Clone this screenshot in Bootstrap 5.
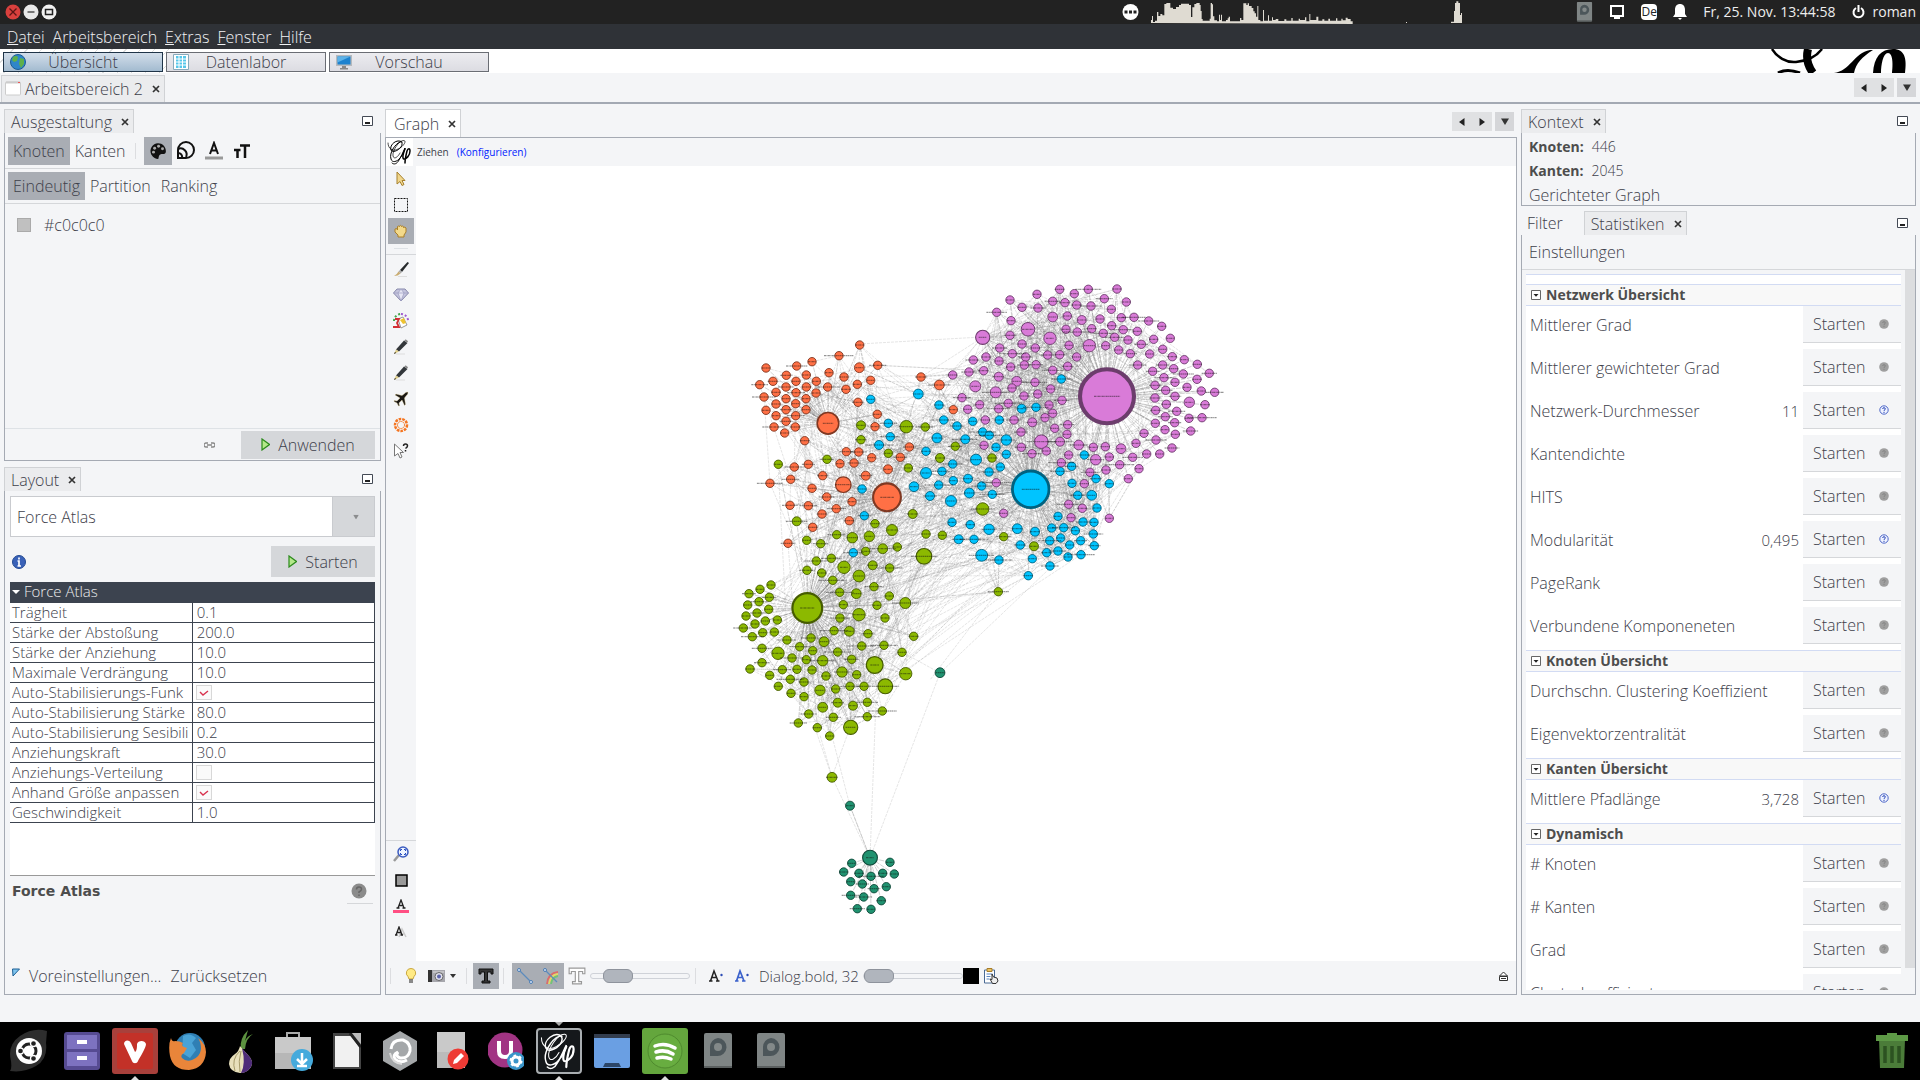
<!DOCTYPE html>
<html lang="de">
<head>
<meta charset="utf-8">
<meta name="viewport" content="width=device-width, initial-scale=1">
<title>Gephi</title>
<link href="https://cdn.jsdelivr.net/npm/bootstrap@5.3.0/dist/css/bootstrap.min.css" rel="stylesheet">
<script src="https://cdn.jsdelivr.net/npm/bootstrap@5.3.0/dist/js/bootstrap.bundle.min.js"></script>
<style>
:root{--edge:#a5aab3;--soft:#d5d7da;--face:#f4f5f7;--press:#a9adb4;--ink:#3d404a}
html,body{height:100%}
body{font-family:"Open Sans","Noto Sans",sans-serif;font-weight:300;font-size:16px;line-height:20px;color:var(--ink);background:var(--face);overflow:hidden}
svg{display:block;flex:none}
button{font:inherit;color:inherit;border:0;background:none;padding:0}
a{color:inherit;text-decoration:none}
b,h2,h3{font-weight:700;color:#4d4d4d;font-size:14px;line-height:20px;margin:0}
.sysbar{height:24px;background:#222;color:#eee;font-weight:400;font-size:14px}
.monitor{margin-right:97px}
.lang-box{width:16px;font-size:12px;line-height:16px}
.menubar{height:25px;background:#2f3237;color:#f2f3f5;padding-left:7px;gap:8px}
.banner{height:24px;background:#fff}
.hatch{background:repeating-linear-gradient(135deg,#fff 0 9px,#ddd 9px 10px);width:170px;height:24px;margin-right:-170px}
.persps{gap:3px;padding:2px 0 0 3px}
.persp{width:160px;height:20px;border:1px solid #6a6d74;background:linear-gradient(#ececf0,#dcdce2);padding:0 22px 0 6px}
.persp.on{border:1px solid #1f3448;background:linear-gradient(#d3deea,#a3bbd0)}
.worktabs{height:31px;border-bottom:2px solid #a3a9b3;padding-left:1px}
.tab{border:1px solid #d0d2d5;border-bottom:0;background:#ebecee;padding:0 4px 0 6px;gap:9px;height:24px;white-space:nowrap}
.arrows{background:#e0e1e3;height:19px;width:40px}
.arrows.one{width:19px;background:#d5d6d9}
.dockpane{border:1px solid var(--edge);border-top:0}
.side-l{width:377px;padding-top:1px}
.side-r{width:395px;padding-top:1px}
.tabline{height:24px}
.seg{height:28px;padding:0 5px}
.on-seg{background:var(--press)}
.rule{border-bottom:1px solid var(--soft)}
.greybtn{background:var(--soft);gap:8px}
.combo{appearance:none;width:100%;height:41px;border:1px solid #c9cbcf;padding:0 6px;font:inherit;color:inherit;border-radius:0;background:linear-gradient(90deg,#fff calc(100% - 42px),#c9cbcf calc(100% - 42px) calc(100% - 41px),var(--soft) calc(100% - 41px))}
.props{width:100%;table-layout:fixed;border-collapse:collapse;background:#fff;font-size:15px}
.props th{background:#3c434f;color:#eee;font-weight:300;height:20px;padding:0 2px;line-height:19px}
.props td{border:1px solid #3c434f;border-left:0;height:20px;padding:0 2px;line-height:19px;white-space:nowrap;overflow:hidden}
.props td+td{padding-left:4px}
.props input{appearance:none;width:16px;height:15px;border:1px solid #d8d8d8;background:#fafafa;margin:0 0 0 -1px;display:block}
.props input:checked{background:#fafafa url("data:image/svg+xml,%3Csvg xmlns='http://www.w3.org/2000/svg' viewBox='0 0 14 13'%3E%3Cpath d='M3 6l3 3 5-4' fill='none' stroke='%23d8324e' stroke-width='1.4'/%3E%3C/svg%3E") center/14px 13px no-repeat}
.tools{width:30px;border-right:0}
.tool{width:26px;height:26px;display:flex;align-items:center;justify-content:center}
.hint{font-size:10px;font-weight:400;height:28px}
.canvas-bar{height:33px;font-size:15px;padding:0 0 3px 4px}
.vsep{width:1px;height:16px;background:#dcdde0;flex:none}
.rng{appearance:none;width:100px;height:16px;background:none;margin:0}
.rng::-webkit-slider-runnable-track{height:6px;border:1px solid #cfd2d8;border-radius:3px;background:#f4f5f7}
.rng::-webkit-slider-thumb{appearance:none;width:30px;height:14px;margin-top:-5px;border-radius:6px;background:#b0b5bd;border:1px solid #8e939c}
.stats{background:#fff;overflow:hidden;margin:4px 0 4px 4px}
.stats-head{height:22px;border-top:1px solid #d2dbf3;border-bottom:1px solid #d2dbf3;background:#f8f8f8;padding-left:5px;gap:5px}
.stat{height:43px}
.stat-name{height:37px;padding:0 4px}
.stat-val{font-size:15px}
.stat-run{width:98px;height:37px;background:var(--face);border-bottom:1px solid var(--soft);padding:0 12px 0 10px}
.track{width:10px;background:#dcdddf;margin-bottom:26px}
.taskbar{height:58px;background:#000;padding:0 2px}
.launch{width:53px;height:58px;position:relative;display:flex;align-items:center;justify-content:center}
.run::after{content:"";position:absolute;bottom:0;left:23px;border:4px solid transparent;border-bottom:4px solid #ddd;border-top:0}
.cur::before{content:"";position:absolute;top:0;left:23px;border:4px solid transparent;border-top:4px solid #aaa;border-bottom:0}
</style>
</head>
<body class="d-flex flex-column">
<svg width="0" height="0" class="position-absolute">
<defs>
<symbol id="x" viewBox="0 0 8 8"><path d="M1 1l6 6M7 1L1 7" stroke="#333" stroke-width="1.700"/></symbol>
<symbol id="min" viewBox="0 0 11 10"><path d="M.5.5h10v9h-10z" fill="#fff" stroke="#444a55"/><path d="M3 6h5v2H3z" fill="#222"/></symbol>
<symbol id="al" viewBox="0 0 6 8"><path d="M5.500 0v8L0 4z" fill="#222"/></symbol>
<symbol id="ar" viewBox="0 0 6 8"><path d="M.5 0v8L6 4z" fill="#222"/></symbol>
<symbol id="ad" viewBox="0 0 8 7"><path d="M0 .5h8L4 7z" fill="#333"/></symbol>
<symbol id="play" viewBox="0 0 9 13"><path d="M1 1l7.500 5.500L1 12z" fill="#b4e88a" stroke="#2b8a1c" stroke-width="1.200"/></symbol>
<symbol id="fold" viewBox="0 0 10 10"><path d="M.5.5h9v9h-9z" fill="#fff" stroke="#666"/><path d="M2.500 4h5L5 6.800z" fill="#222"/></symbol>
<symbol id="q0" viewBox="0 0 10 10"><circle cx="5" cy="5" r="4.800" fill="#9f9f9f"/><path d="M3.700 4q0-1.300 1.300-1.300T6.300 4Q6.300 4.700 5 5.500v.7M5 7v1" fill="none" stroke="#858585"/></symbol>
<symbol id="q1" viewBox="0 0 10 10"><circle cx="5" cy="5" r="4.200" fill="#eef2ff" stroke="#4f68c8"/><path d="M3.700 4q0-1.300 1.300-1.300T6.300 4Q6.300 4.700 5 5.500v.7M5 7v1" fill="none" stroke="#2c49b8"/></symbol>
<symbol id="gephi" viewBox="0 0 26 26"><g fill="none" stroke="currentColor" stroke-linecap="round"><path d="M15 3C10-1 2 6 4 11c1 3 7 1 10-3 2-3 1-6-1-5C8 5 2 14 4 20c1 4 6 3 9-1 3-3 5-8 5-10-2 4-4 9-6 12-2 4-5 5-7 3" stroke-width="1"/><path d="M1 4c0 6 5 9 10 6C16 8 20 2 17 1.500 12 1 5 12 6 17c1 4 5 1 7-3" stroke-width=".7"/><path d="M18 10c-2 4-3 10-1 10s6-3 6-8c0-3-2-3-3 0-1 4-2 9-2 12" stroke-width="1.500"/></g></symbol>
<symbol id="pencil" viewBox="0 0 16 16"><path d="M3 15h9" stroke="#ddd"/><path d="M11 1.500l3.500 2.500L6 12.500 3 10.500z" fill="#33373b"/><path d="M3 10.500L1 15l5-2.500z" fill="#dccb87"/><path d="M1 15l1-2 1 1z" fill="#111"/><path d="M12 1l2.500 2" stroke="#888" stroke-width="2"/></symbol>
<symbol id="disk" viewBox="0 0 28 56"><rect width="28" height="35" rx="2" fill="#7f8585"/><rect y="33" width="28" height="2" fill="#5b6060"/><path d="M14 5a9 9 0 1 1-1 18H6V14a9 9 0 0 1 8-9z" fill="#4c565a"/><circle cx="14" cy="14" r="4" fill="#838989"/></symbol>
</defs></svg>

<header>
<div class="sysbar d-flex align-items-center">
  <svg width="60" height="24" viewBox="0 0 60 24"><circle cx="13" cy="12" r="7.500" fill="#d9403d"/><path d="M9.500 8.500l7 7m0-7l-7 7" stroke="#5a1515" stroke-width="1.300"/><circle cx="31" cy="12" r="7.500" fill="#e8e8e8"/><path d="M27.500 12h7" stroke="#777" stroke-width="2"/><circle cx="49" cy="12" r="7.500" fill="#f2f2f2"/><path d="M45.500 9.500h7v5h-7z" fill="none" stroke="#222" stroke-width="1.500"/></svg>
  <svg class="ms-auto" width="17" height="24" viewBox="0 0 17 24"><circle cx="8.500" cy="12" r="8" fill="#fff"/><path d="M2.500 12h12" stroke="#222" stroke-width="3" stroke-dasharray="3 1.500"/></svg>
  <svg class="monitor" width="340" height="24" viewBox="0 0 1020 72"><path fill="#dfdbd2" d="M36 69V60h3V48h3V66h6V62h6V36h4v12h6v-6h6v4h6V12h6V9h12v14h8v4h9v-6h9v-6h6v-4h24v4h6v36h4V22h6V12h6V9h10v6h3v18h3v24h3v5h21v-6h3V9h4v4h3v36h4v12h8v3h6V44h3v16h3v-16h3v20h12v-4h5v-5h3V50h4v14h30V54h4v6h6V10h9v5h4v-5h4v8h8v6h5v10h4v6h4v10h4V18h3v42h6v4h8V30h3v32h12V46h3v16h9V52h3v8h8v-3h8v6h18v-5h6v4h15v-8h4v8h18v-6h4v4h15v-8h4v12h9V42h3v18h18V50h6v12h12v-4h6v4h12v-6h5v6h18v-7h4v7h12v-6h4v5h9v-8h6v4h9v7h6v8zM801 66h3v3h-3zM936 69v-4h9V33h3V9h4V4h6v5h5v36h3v-6h3v30z"/></svg>
  <svg width="17" height="20" viewBox="0 0 28 36"><use href="#disk" width="28" height="56"/></svg>
  <svg class="ms-3" width="16" height="16" viewBox="0 0 16 16"><path d="M2 2h12v10H2zM5 14h6" fill="none" stroke="#fff" stroke-width="2"/></svg>
  <span class="lang-box bg-white text-dark ms-3 text-center rounded-1">De</span>
  <svg class="ms-3" width="14" height="16" viewBox="0 0 14 16"><path d="M7 0c3 0 5 2 5 6v4l2 3H0l2-3V6c0-4 2-6 5-6zM5 14h4l-2 2z" fill="#fff"/></svg>
  <span class="ms-3 text-nowrap">Fr, 25. Nov. 13:44:58</span>
  <svg class="ms-3 me-2" width="13" height="14" viewBox="0 0 13 14"><path d="M4 3a5 5 0 1 0 5 0M6.500 0v7" fill="none" stroke="#fff" stroke-width="2"/></svg>
  <span class="pe-1">roman</span>
</div>
<nav class="menubar d-flex align-items-center">
  <a href="#"><u>D</u>atei</a><a href="#">Arbeitsbereich</a><a href="#"><u>E</u>xtras</a><a href="#"><u>F</u>enster</a><a href="#"><u>H</u>ilfe</a>
</nav>
<div class="banner d-flex align-items-center">
  <div class="hatch"></div>
  <div class="persps d-flex position-relative">
  <button class="persp on d-flex align-items-center"><svg width="16" height="16" viewBox="0 0 16 16"><circle cx="8" cy="8" r="7.500" fill="#2f86c9" stroke="#1d5c94"/><path d="M3 3q3-2 5 0L7 7 4 8 2 6zM10 4l4 1v5l-3 4-2-4z" fill="#5fb04a"/></svg><span class="flex-fill text-center">Übersicht</span></button>
  <button class="persp d-flex align-items-center"><svg width="16" height="16" viewBox="0 0 16 16"><path d="M.5.500h15v15H.5z" fill="#fff" stroke="#8ab"/><path d="M3 2h10v12H3z" fill="#57c7ea"/><path d="M3 5h10M3 8h10M3 11h10M6 2v12M9.500 2v12" stroke="#fff"/></svg><span class="flex-fill text-center">Datenlabor</span></button>
  <button class="persp d-flex align-items-center"><svg width="16" height="16" viewBox="0 0 16 16"><path d="M0 1h16v11H0z" fill="#b6b9bd"/><path d="M1.500 2.500h13v8h-13z" fill="#1d82cf"/><path d="M1.500 2.500h13l-13 6z" fill="#5cb2e8"/><path d="M6 12h4v2h2v1.500H4V14h2z" fill="#888"/></svg><span class="flex-fill text-center">Vorschau</span></button>
  </div>
  <svg class="ms-auto me-2" width="144" height="24" viewBox="0 0 144 24"><g fill="none" stroke="#000"><path d="M4 0c5 8 14 14 24 13S48 8 54 0" stroke-width="2.500"/><path d="M40 0c-2 8-1 16 5 24" stroke-width="8"/><path d="M10 24q9-5 22 0" stroke-width="3"/></g><path d="M66 24C82 22 86 4 102 1h3C94 8 88 14 86 24zM105 24c1-16 8-24 20-24s14 10 12 24h-13c1-8 1-20-4-20s-7 12-7 20z"/></svg>
</div>
<div class="worktabs d-flex align-items-end">
  <div class="tab d-flex align-items-center" style="height:27px;padding-left:3px"><span class="d-flex align-items-center gap-1"><svg width="16" height="16" viewBox="0 0 16 16"><rect x=".5" y="1" width="15" height="13" rx="1" fill="#fff" stroke="#ccc"/><path d="M1 1.500h14" stroke="#ccc" stroke-width="2"/><path d="M13 1.500h2" stroke="#e55"/></svg>Arbeitsbereich 2</span><svg width="8" height="8"><use href="#x"/></svg></div>
  <div class="ms-auto d-flex align-self-center me-1" style="gap:3px"><button class="arrows d-flex align-items-center justify-content-around" aria-label="Blättern"><svg width="6" height="8"><use href="#al"/></svg><svg width="6" height="8"><use href="#ar"/></svg></button><button class="arrows one d-flex align-items-center justify-content-center" aria-label="Liste"><svg width="8" height="7"><use href="#ad"/></svg></button></div>
</div>
</header>

<main class="d-flex flex-fill px-1 pt-1" style="min-height:0;gap:4px;padding-bottom:27px">
<!-- linke Seite -->
<div class="side-l d-flex flex-column flex-shrink-0">
  <div class="tabline d-flex align-items-center justify-content-between pe-2"><div class="tab d-flex align-items-center">Ausgestaltung<svg width="8" height="8"><use href="#x"/></svg></div><svg width="11" height="10"><use href="#min"/></svg></div>
  <section class="dockpane d-flex flex-column" style="height:328px">
    <div class="rule d-flex align-items-center" style="height:36px;padding-left:3px">
      <button class="seg on-seg">Knoten</button><button class="seg">Kanten</button><span class="vsep mx-1"></span>
      <button class="seg on-seg ms-1" aria-label="Farbe"><svg width="18" height="18" viewBox="0 0 16 16"><path d="M8 1a7 7 0 0 0-6 10c2 3 4 4 6 4 1 0 0-3 2-4s5 1 5-3c0-4-3-7-7-7z" fill="#111"/><g fill="#aaa"><circle cx="5" cy="5.500" r="1.300"/><circle cx="8.500" cy="3.800" r="1.300"/><circle cx="12" cy="6" r="1.300"/><circle cx="4" cy="9" r="1.300"/></g></svg></button>
      <button class="ms-1" aria-label="Größe"><svg width="19" height="19" viewBox="0 0 19 19"><g fill="none" stroke="#111" stroke-width="2"><path d="M2 9a8 8 0 1 1 8 8H2z"/><path d="M2 8a6 6 0 0 1 8 8M2 12a4 4 0 0 1 4 5" /></g></svg></button>
      <button style="margin-left:10px" aria-label="Schriftfarbe"><svg width="18" height="19" viewBox="0 0 18 19"><path d="M5 13L9 2l4 11M6 9.500h6" fill="none" stroke="#111" stroke-width="2"/><path d="M0 17h18" stroke="#999" stroke-width="3"/></svg></button>
      <button style="margin-left:11px" aria-label="Schriftgröße"><svg width="16" height="16" viewBox="0 0 16 16"><path d="M6 2.500h10M11 2v13M0 7h6.500M3.500 7v8" stroke="#111" stroke-width="2.500"/></svg></button>
    </div>
    <div class="rule d-flex align-items-center" style="height:35px;padding-left:3px"><button class="seg on-seg">Eindeutig</button><button class="seg">Partition</button><button class="seg">Ranking</button></div>
    <div class="d-flex align-items-center ms-2" style="gap:13px;padding:11px 0 0 4px"><span style="width:14px;height:14px;background:#c0c0c0;border:1px solid #aaa"></span>#c0c0c0</div>
    <div class="mt-auto border-top d-flex align-items-center" style="height:32px"><svg style="margin-left:199px" width="11" height="6" viewBox="0 0 11 6"><path d="M4 1H2a2 2 0 0 0 0 4h2M7 1h2a2 2 0 0 1 0 4H7M3 3h5" fill="none" stroke="#888" stroke-width="1.300"/></svg><button class="greybtn d-flex align-items-center justify-content-center ms-auto" style="width:134px;height:28px;margin-right:5px"><svg width="9" height="13"><use href="#play"/></svg>Anwenden</button></div>
  </section>
  <div class="tabline d-flex align-items-center justify-content-between pe-2" style="margin-top:6px"><div class="tab d-flex align-items-center">Layout<svg width="8" height="8"><use href="#x"/></svg></div><svg width="11" height="10"><use href="#min"/></svg></div>
  <section class="dockpane d-flex flex-column flex-fill" style="padding:5px 5px 8px">
    <div class="position-relative"><select class="combo" aria-label="Layout"><option>Force Atlas</option></select><svg class="position-absolute top-50 end-0 translate-middle-y pe-none" style="margin-right:16px" width="6" height="5" viewBox="0 0 8 7" opacity=".45"><use href="#ad"/></svg></div>
    <div class="d-flex align-items-center" style="padding:9px 0 5px 2px"><svg width="14" height="14" viewBox="0 0 14 14"><circle cx="7" cy="7" r="6.500" fill="#3a62b8" stroke="#244a92"/><path d="M7 2.500v2M5.500 6H7v5M5.500 11h3.500" fill="none" stroke="#fff" stroke-width="1.700"/></svg><button class="greybtn d-flex align-items-center justify-content-center ms-auto" style="width:104px;height:31px"><svg width="9" height="13"><use href="#play"/></svg>Starten</button></div>
    <div class="bg-white" style="height:294px;border-bottom:1px solid #999">
    <table class="props"><thead><tr><th colspan="2" scope="col"><svg class="d-inline-block me-1" width="8" height="12" viewBox="0 0 8 12"><path d="M0 3h8L4 7z" fill="#fff"/></svg>Force Atlas</th></tr></thead><tbody>
    <tr><td>Trägheit</td><td>0.1</td></tr>
    <tr><td>Stärke der Abstoßung</td><td>200.0</td></tr>
    <tr><td>Stärke der Anziehung</td><td>10.0</td></tr>
    <tr><td>Maximale Verdrängung</td><td>10.0</td></tr>
    <tr><td><label for="c1">Auto-Stabilisierungs-Funk</label></td><td><input id="c1" type="checkbox" checked></td></tr>
    <tr><td>Auto-Stabilisierung Stärke</td><td>80.0</td></tr>
    <tr><td>Auto-Stabilisierung Sesibili</td><td>0.2</td></tr>
    <tr><td>Anziehungskraft</td><td>30.0</td></tr>
    <tr><td><label for="c2">Anziehungs-Verteilung</label></td><td><input id="c2" type="checkbox"></td></tr>
    <tr><td><label for="c3">Anhand Größe anpassen</label></td><td><input id="c3" type="checkbox" checked></td></tr>
    <tr><td>Geschwindigkeit</td><td>1.0</td></tr>
    </tbody></table></div>
    <div class="d-flex justify-content-between" style="padding:5px 2px"><h2 style="font-family:'DejaVu Sans',sans-serif">Force Atlas</h2><span class="rule px-1" style="height:23px;width:26px"><svg width="16" height="16" viewBox="0 0 16 16" style="margin-top:2px"><circle cx="8" cy="8" r="7.500" fill="#8b8b8b"/><path d="M5.500 6.500q0-2.500 2.500-2.500t2.500 2.200Q10.500 7.500 8 9v1M8 11.500v1.500" fill="none" stroke="#666" stroke-width="1.500"/></svg></span></div>
    <div class="mt-auto d-flex align-items-center" style="gap:9px;padding-left:2px"><svg width="8" height="16" viewBox="0 0 8 16"><path d="M.5 1h7L1 8z" fill="#7fc4ee" stroke="#1c5f94"/></svg><a href="#">Voreinstellungen...</a><a href="#">Zurücksetzen</a></div>
  </section>
</div>

<!-- Graph -->
<div class="d-flex flex-column flex-fill" style="min-width:0">
  <div class="d-flex align-items-center" style="height:30px;border-bottom:1px solid var(--edge)"><div class="tab bg-white d-flex align-items-center align-self-end" style="height:28px;padding-left:8px">Graph<svg width="8" height="8"><use href="#x"/></svg></div>
  <div class="ms-auto d-flex" style="gap:3px;margin:-2px 3px 0 0"><button class="arrows d-flex align-items-center justify-content-around" aria-label="Blättern"><svg width="6" height="8"><use href="#al"/></svg><svg width="6" height="8"><use href="#ar"/></svg></button><button class="arrows one d-flex align-items-center justify-content-center" aria-label="Liste"><svg width="8" height="7"><use href="#ad"/></svg></button></div></div>
  <section class="dockpane d-flex flex-column flex-fill" style="min-height:0">
    <div class="hint d-flex align-items-center"><span class="bg-white text-black" style="width:27px;height:28px;padding:1px"><svg width="26" height="26"><use href="#gephi"/></svg></span><span class="ms-1">Ziehen</span><a href="#" class="ms-2" style="color:#0022ff">(Konfigurieren)</a></div>
    <div class="d-flex flex-fill" style="min-height:0">
      <div class="tools d-flex flex-column align-items-center flex-shrink-0">
        <button class="tool"><svg width="12" height="16" viewBox="0 0 12 16"><path d="M2 1l8 8.500H7l2 4-2 1-2-4-3 2.500z" fill="#f1d68c" stroke="#a6812e"/></svg></button>
        <button class="tool"><svg width="16" height="16" viewBox="0 0 16 16"><rect x="1.500" y="1.500" width="13" height="13" fill="none" stroke="#111" stroke-dasharray="2 1"/></svg></button>
        <button class="tool on-seg"><svg width="14" height="14" viewBox="0 0 14 14"><path d="M4 13v-2L1 8V5l1.500-.5L3.500 6V2.500q1-1 2 0V2q1-1.200 2 0v.5q1-1 2 .2V3.500q1.500-1 2.500.5V8l-2 3v2z" fill="#f3d98a" stroke="#a97f2a"/></svg></button>
        <div class="w-100 rule" style="height:11px;margin-bottom:1px"><div class="mx-2 border-bottom" style="height:5px"></div></div>
        <button class="tool"><svg width="16" height="16" viewBox="0 0 16 16"><path d="M14.500 1L16 2 9 11 7 9z" fill="#25292b"/><path d="M7 9l2 2-1.500 1.500-2-2z" fill="#aaa"/><path d="M5.500 10.500l2 2Q5 15 1 15q3-1.500 4.500-4.500z" fill="#c9ac72"/><path d="M5 15.500h9" stroke="#ddd"/></svg></button>
        <button class="tool"><svg width="16" height="14" viewBox="0 0 16 14"><path d="M4 1h8l3.500 4L8 13 .5 5z" fill="#c3c3dc" stroke="#8788ab"/><path d="M.5 5h15M5 5l3 8 3-8-3-4z" fill="#e6e6f4" stroke="#9b9cc0" stroke-width=".7"/></svg></button>
        <button class="tool"><svg width="16" height="16" viewBox="0 0 16 16"><path d="M8 1a7 7 0 0 1 7 8" fill="none" stroke="#a05ad0" stroke-width="2" stroke-dasharray="2 2"/><path d="M1 8A7 7 0 0 1 8 1" fill="none" stroke="#45a64c" stroke-width="2" stroke-dasharray="2 2"/><path d="M5 6l5-2 4 8-6 3z" fill="#fff" stroke="#999"/><path d="M7 7l4-2 2 5-3 1z" fill="#eec331"/><path d="M2 6h4l-2 4 2 4H0" fill="none" stroke="#d22f34" stroke-width="1.800"/></svg></button>
        <button class="tool"><svg width="16" height="16"><use href="#pencil"/></svg></button>
        <button class="tool"><svg width="16" height="16"><use href="#pencil"/></svg></button>
        <button class="tool"><svg width="16" height="16" viewBox="0 0 16 16"><path d="M15 1q-2-.5-4 2L9 4.500 3 3 2 4l5 3-3 3-3-.500v1l3 1.500L5.500 15h1L6 12l3-3 2.500 5.500 1-1L11.500 7 13 5q2.500-2 2-4z" fill="#1a1713" stroke="#ecd9a5" stroke-width=".4"/></svg></button>
        <button class="tool"><svg width="16" height="16" viewBox="0 0 16 16"><circle cx="8" cy="8" r="6" fill="none" stroke="#f47521" stroke-width="2.500" stroke-dasharray="2.600 1"/><circle cx="8" cy="8" r="3.500" fill="none" stroke="#f47521" stroke-dasharray="1.700 .5"/></svg></button>
        <button class="tool"><svg width="16" height="16" viewBox="0 0 16 16"><path d="M1.500 1v12L5 10.500 7 15l2-1-2-4.500h3.500z" fill="#fff" stroke="#777"/><path d="M10.500 3q0-2 2-2t2 2q0 1-2 2.500M12.500 7v1.500" fill="none" stroke="#222" stroke-width="1.500"/></svg></button>
        <div class="mt-auto w-100 rule"></div>
        <button class="tool"><svg width="16" height="16" viewBox="0 0 16 16"><path d="M1 15l5-6" stroke="#999" stroke-width="2.500"/><circle cx="10" cy="6" r="5" fill="#eef4ff" stroke="#3a5ac0" stroke-width="1.500"/><path d="M7.500 5V3.500H9M11 3.500h1.500V5M12.500 7v1.500H11M9 8.500H7.500V7" fill="none" stroke="#234ac0"/></svg></button>
        <button class="tool"><svg width="13" height="13" viewBox="0 0 13 13"><path d="M1 1h11v11H1z" fill="#999" stroke="#000" stroke-width="1.500"/></svg></button>
        <button class="tool"><svg width="16" height="14" viewBox="0 0 16 14"><path d="M5 9l3-8 3 8M6 6.500h4M3.500 9h3M9.500 9h3" fill="none" stroke="#222" stroke-width="1.300"/><path d="M0 12.500h16" stroke="#ff4f83" stroke-width="3"/></svg></button>
        <button class="tool" style="margin-bottom:16px"><svg width="14" height="12" viewBox="0 0 14 12"><path d="M5 11l3-8 4 8M7 8h4" fill="none" stroke="#ccc" stroke-width="1.500"/><path d="M2 9l3-8 3 8M3 6.500h4M1 9h2.500M6.500 9H9" fill="none" stroke="#222" stroke-width="1.300"/></svg></button>
      </div>
      <div class="flex-fill bg-white" style="min-width:0"><svg id="net" class="w-100 h-100" viewBox="416 166 1100 795" role="img" aria-label="Graph"></svg></div>
    </div>
    <div class="canvas-bar d-flex align-items-center">
      <span class="vsep"></span>
      <button style="margin-left:14px" aria-label="Hintergrund"><svg width="12" height="16" viewBox="0 0 12 16"><path d="M6 .5a4.500 4.500 0 0 1 3 8L8 11H4L3 8.500a4.500 4.500 0 0 1 3-8z" fill="#ffea84" stroke="#c9a741"/><path d="M4 12h4M4 14h4" stroke="#666" stroke-width="1.500"/></svg></button>
      <button class="d-flex align-items-center" style="margin-left:11px" aria-label="Bildschirmfoto"><svg width="28" height="14" viewBox="0 0 28 14"><path d="M0 1h17v12H0z" fill="#a7a7ad"/><path d="M0 1h4v12H0z" fill="#333"/><path d="M5 3h11" stroke="#ddd"/><circle cx="11" cy="7.500" r="4" fill="#e3e3ee" stroke="#666"/><circle cx="11" cy="7.500" r="2" fill="#5b62a8"/><path d="M22 5h6l-3 4z" fill="#333"/></svg></button>
      <span class="vsep" style="margin-left:10px"></span>
      <button class="tool on-seg" style="margin-left:6px"><svg width="16" height="16" viewBox="0 0 16 16"><path d="M1 1h14v5h-2V4H9.500v9H12v2H4v-2h2.500V4H3v2H1z" fill="#333" stroke="#111"/></svg></button>
      <span class="vsep mx-1"></span>
      <button class="tool on-seg ms-1"><svg width="16" height="16" viewBox="0 0 16 16"><path d="M2 2l12 12" stroke="#5d8bbd" stroke-width="1.300"/><circle cx="2" cy="2" r="1.500" fill="#dbe9f8" stroke="#4b7cb3"/><circle cx="14" cy="14" r="1.500" fill="#dbe9f8" stroke="#4b7cb3"/></svg></button>
      <button class="tool on-seg"><svg width="16" height="16" viewBox="0 0 16 16"><g fill="none"><path d="M4 16Q5 5 15 4" stroke="#dc6b6b" stroke-width="1.800"/><path d="M6 16q1-9 9-10" stroke="#e7d665" stroke-width="1.800"/><path d="M8 16q1-7 7-8" stroke="#73c476" stroke-width="1.800"/></g><path d="M2 2l12 12" stroke="#5d8bbd" stroke-width="1.300"/><circle cx="2" cy="2" r="1.500" fill="#dbe9f8" stroke="#4b7cb3"/></svg></button>
      <button class="mx-1"><svg width="18" height="18" viewBox="0 0 16 16"><path d="M1 1h14v5h-2V4H9.500v9H12v2H4v-2h2.500V4H3v2H1z" fill="#fff" stroke="#999"/></svg></button>
      <input class="rng" type="range" aria-label="Kantenstärke" value="17">
      <span class="vsep" style="margin-left:5px"></span>
      <button style="margin-left:13px" aria-label="Schrift"><svg width="14" height="14" viewBox="0 0 14 14"><path d="M1.500 12L5 2l4 10M3 8.500h4.500M0 12h3.500M7 12h3.500" fill="none" stroke="#222" stroke-width="1.500"/><circle cx="12.500" cy="6" r="1.200" fill="#2b4bb5"/></svg></button>
      <button style="margin-left:12px" aria-label="Schriftmodus"><svg width="14" height="14" viewBox="0 0 14 14"><path d="M1.500 12L5 2l4 10M3 8.500h4.500M0 12h3.500M7 12h3.500" fill="none" stroke="#3c62cc" stroke-width="1.700"/><circle cx="12.500" cy="6" r="1.200" fill="#2b4bb5"/></svg></button>
      <button class="text-nowrap" style="margin-left:10px">Dialog.bold, 32</button>
      <input class="rng ms-1" type="range" aria-label="Schriftgröße" value="0">
      <button style="width:16px;height:16px;background:#000" aria-label="Farbe"></button>
      <button class="ms-1" aria-label="Attribute"><svg width="16" height="16" viewBox="0 0 16 16"><path d="M1.500 2h10v13h-10z" fill="#fff" stroke="#4a6a94"/><path d="M4 .5h5v3H4z" fill="#ecc463" stroke="#a67c2a"/><path d="M3.500 6h6M3.500 8.500h4M3.500 11h3" stroke="#5c86c0"/><path d="M9 6l1.500 3 3.500 1 1 3-2 2.500H9.500L7 11l2 .5z" fill="#eee" stroke="#333"/></svg></button>
      <button class="ms-auto me-2" aria-label="Ausklappen"><svg width="9" height="10" viewBox="0 0 9 10"><path d="M4.500 1L8.500 5h-8zM.5 5.500h8v4h-8zM2 7.500h5" fill="#fff" stroke="#333"/></svg></button>
    </div>
  </section>
</div>

<!-- rechte Seite -->
<div class="side-r d-flex flex-column flex-shrink-0">
  <div class="tabline d-flex align-items-center justify-content-between pe-2"><div class="tab d-flex align-items-center">Kontext<svg width="8" height="8"><use href="#x"/></svg></div><svg width="11" height="10"><use href="#min"/></svg></div>
  <section class="dockpane" style="height:73px;padding:4px 7px 0"><div class="d-flex gap-2" style="height:24px;font-size:14px"><b>Knoten:</b>446</div><div class="d-flex gap-2" style="height:24px;font-size:14px"><b>Kanten:</b>2045</div><div>Gerichteter Graph</div></section>
  <div class="tabline d-flex align-items-center pe-2" style="margin-top:5px"><a href="#" style="padding-left:6px">Filter</a><div class="tab d-flex align-items-center" style="margin-left:21px">Statistiken<svg width="8" height="8"><use href="#x"/></svg></div><svg class="ms-auto" width="11" height="10"><use href="#min"/></svg></div>
  <section class="dockpane d-flex flex-column flex-fill" style="min-height:0">
    <div class="rule d-flex align-items-center flex-shrink-0" style="height:35px;padding-left:7px"><button>Einstellungen</button></div>
    <div class="d-flex flex-fill" style="min-height:0;gap:4px"><div id="stats" class="stats flex-fill"></div><div class="track"></div></div>
  </section>
</div>
</main>

<footer class="taskbar d-flex">
<button class="launch"><svg width="44" height="44" viewBox="0 0 44 44"><path d="M40 2q-14-4-27 5T4 32q1 8-1 10 14 2 26-5T39 14z" fill="#2d2d2d"/><circle cx="22" cy="22" r="13" fill="#fff"/><circle cx="22" cy="22" r="7" fill="none" stroke="#222" stroke-width="3"/><g fill="#222" stroke="#fff" stroke-width="1.300"><circle cx="13.500" cy="22" r="3"/><circle cx="26.500" cy="14.500" r="3"/><circle cx="26.500" cy="29.500" r="3"/></g></svg></button>
<button class="launch"><svg width="36" height="38" viewBox="0 0 36 38"><rect width="36" height="38" rx="3" fill="#564b92"/><path d="M3 3h30v14H3zM3 20h30v14H3z" fill="#7d72c0"/><path d="M13 8h10v4H13zM13 24h10v4H13z" fill="#fff"/></svg></button>
<button class="launch run"><svg width="46" height="46" viewBox="0 0 46 46"><rect width="46" height="46" rx="3" fill="#a8403b"/><rect x="5" y="5" width="36" height="36" rx="2" fill="#c33128"/><path d="M12 16c0-4 5-5 7-1l4 9c2-1 2-5 2-8 1-4 8-4 9 0 0 4-6 13-8 17-1 3-5 3-6 0z" fill="#fff"/></svg></button>
<button class="launch"><svg width="38" height="38" viewBox="0 0 38 38"><circle cx="21" cy="16" r="15" fill="#2f7fb4"/><path d="M14 4q7-4 13 2l-4 5 4 7-6 8-8-5z" fill="#4aa3d6"/><path d="M2 6q1 4 4 3 5 0 8 2-2 3 1 4l3 1-3 5q-4 2-2 5 4 4 10 2 8-3 9-11 0-7-3-11 8 6 8 14-1 16-17 18Q4 38 1 24-1 13 2 6z" fill="#e9853a"/></svg></button>
<button class="launch"><svg width="28" height="44" viewBox="0 0 28 44"><path d="M14 20q-2-10 7-19l-3 11q2-5 8-7-7 4-8 15z" fill="#5d9340"/><path d="M13 17q3 4 8 9 6 6 3 12-4 6-11 6Q3 43 2 35q0-6 6-10 4-3 5-8z" fill="#e8e0bb"/><path d="M15 19q3 4 7 8 5 6 2 11-4 6-10 6 5-9 1-25z" fill="#4f2c79"/><path d="M13 22q-9 8-5 20M14 22q-3 10-1 21" fill="none" stroke="#a79b6a"/></svg></button>
<button class="launch"><svg width="38" height="40" viewBox="0 0 38 40"><path d="M12 8V2h12v6" fill="none" stroke="#aaa" stroke-width="2"/><path d="M0 6h36v32H0z" fill="#c9c9c9"/><path d="M0 22h36v16H0z" fill="#b7b7b7"/><circle cx="27" cy="29" r="11" fill="#45aadc"/><path d="M27 22v10M22 28l5 5 5-5M22 35h10" fill="none" stroke="#fff" stroke-width="2.500"/></svg></button>
<button class="launch"><svg width="28" height="36" viewBox="0 0 28 36"><path d="M0 0h28v36H0z" fill="#444"/><path d="M2 3h16l8 11v20H2z" fill="#f1f1f1"/><path d="M18 0l10 13V0z" fill="#bbb"/><path d="M17 0l11 14" stroke="#222" stroke-width="3"/></svg></button>
<button class="launch"><svg width="36" height="40" viewBox="0 0 36 40"><path d="M18 0l17 10v20L18 40 1 30V10z" fill="#a4a7a9"/><path d="M9 18q1-10 12-9 8 3 7 11-2 8-10 7-5-2-2-6-6 3-3 7 5 5 12 1" fill="none" stroke="#fff" stroke-width="3"/><path d="M8 22q2 10 12 11" fill="none" stroke="#ddd" stroke-width="2"/></svg></button>
<button class="launch"><svg width="32" height="38" viewBox="0 0 32 38"><path d="M0 0h28v36H0z" fill="#c9c9c9"/><path d="M0 20h28v16H0z" fill="#bbb"/><circle cx="21" cy="27" r="10.500" fill="#ee3b35"/><path d="M16 32l1-4 7-7 3 3-7 7z" fill="#fff"/></svg></button>
<button class="launch"><svg width="36" height="38" viewBox="0 0 36 38"><circle cx="17" cy="18" r="17.500" fill="#a13483"/><path d="M11 9v10q0 6 6 6t6-6V9" fill="none" stroke="#fff" stroke-width="4"/><circle cx="28" cy="29" r="9" fill="#3b95c9"/><circle cx="28" cy="29" r="4" fill="none" stroke="#fff" stroke-width="3"/><circle cx="28" cy="29" r="5.500" fill="none" stroke="#fff" stroke-width="2" stroke-dasharray="2.500 3.200"/></svg></button>
<button class="launch run cur text-white"><svg width="46" height="46" viewBox="0 0 46 46"><rect x="1" y="1" width="44" height="44" rx="3" fill="#15181b" stroke="#a9adb0" stroke-width="2"/><use href="#gephi" x="4" y="4" width="38" height="38"/></svg></button>
<button class="launch"><svg width="36" height="34" viewBox="0 0 36 34"><rect width="36" height="34" rx="2" fill="#6a9fe3"/><path d="M0 0h36v4H0z" fill="#333d4e"/><path d="M9 33l2-4h14l2 4z" fill="#2c4668"/></svg></button>
<button class="launch run"><svg width="46" height="46" viewBox="0 0 46 46"><rect width="46" height="46" rx="3" fill="#64a63d"/><circle cx="23" cy="23" r="17" fill="#68ad40" stroke="#4f8a2e"/><path d="M13 18q10-4 20 2M14 24q9-3 17 2M15 30q7-2 14 1" fill="none" stroke="#fff" stroke-width="3.500" stroke-linecap="round"/></svg></button>
<button class="launch"><svg width="28" height="36" viewBox="0 0 28 36"><use href="#disk" width="28" height="56"/></svg></button>
<button class="launch"><svg width="28" height="36" viewBox="0 0 28 36"><use href="#disk" width="28" height="56"/></svg></button>
<button class="launch ms-auto"><svg width="32" height="36" viewBox="0 0 32 36"><path d="M3 6h26l-1 29H4z" fill="#4b7c39"/><path d="M0 2h11V0h10v2h11v6H0z" fill="#5d9946"/><path d="M9 13v17M16 13v17M23 13v17" stroke="#2c5221" stroke-width="3.500"/></svg></button>
</footer>

<script>
/* Statistikliste: [Name, Ergebnis] je Gruppe */
const groups=[
["Netzwerk Übersicht",["Mittlerer Grad"],["Mittlerer gewichteter Grad"],["Netzwerk-Durchmesser","11"],["Kantendichte"],["HITS"],["Modularität","0,495"],["PageRank"],["Verbundene Komponeneten"]],
["Knoten Übersicht",["Durchschn. Clustering Koeffizient"],["Eigenvektorzentralität"]],
["Kanten Übersicht",["Mittlere Pfadlänge","3,728"]],
["Dynamisch",["# Knoten"],["# Kanten"],["Grad"],["Clusterkoeffizient"]]];
document.getElementById("stats").innerHTML='<div style="height:10px;border-top:1px solid #d2dbf3"></div>'+groups.map(([g,...r])=>
`<h3 class="stats-head d-flex align-items-center"><svg width="10" height="10"><use href="#fold"/></svg>${g}</h3>`+r.map(([n,v])=>
`<div class="stat d-flex"><div class="stat-name flex-fill d-flex align-items-center justify-content-between"><span>${n}</span><span class="stat-val">${v||""}</span></div><button class="stat-run d-flex align-items-center justify-content-between">Starten<svg width="10" height="10"><use href="#q${v?1:0}"/></svg></button></div>`).join("")).join("");

/* Knoten: x,y[,Radius] in Drittelpixeln ab dem Ursprung des Ausschnitts */
const sets=[
["o",730,320,"108,144 89,194 102,231 108,271 129,184 169,166 200,138 246,125 198,184 229,165 168,201 229,201 259,184 138,217 198,218 258,219 168,236 228,236 138,252 197,251 168,269 228,269 138,287 197,287 168,304 132,321 196,321 164,339 224,362 297,158 293,201 327,107 389,75 388,143,16 342,171 348,208 382,193 422,181 443,136 384,247 442,283 435,320 294,310,35 573,171 349,395 386,396 330,431 372,429 425,413 474,448,15 511,412 538,381 278,467 235,433 193,441 182,478 120,490 246,505 407,467,15 340,494,25 471,532,45 290,531 366,545 319,566 276,582 235,557 180,556 248,622 358,602 174,670"],
["g",730,320,"145,433 291,418 393,316,15 393,359 529,320,20 586,321 475,400 535,444 548,582,15 435,611 486,630,18 418,649,17 367,653,17 320,644 230,661 272,671 200,604,15 407,694 458,686,16 502,681 588,642 582,709,25 259,723 304,715 231,751 275,759 342,742,20 387,768,19 428,736,15 479,744"],
["b",730,320,"422,238 475,310 481,350 447,375,15 565,222,16 588,394 588,459,18 552,500,16 600,528,15 396,507 403,587 370,698"],
["o",900,270,"118,345,16 160,419"],
["g",900,270,"120,564,15 166,529 276,564 248,717,20 127,796 311,800 402,829,15 295,965"],
["b",900,270,"117,405 131,450 171,468 218,454 298,450 365,416,15 408,412 484,327 111,504,16 196,508,15 248,486 268,496 319,510,17 288,532 319,553 228,569,18 158,582 126,604 116,645 160,632 204,626,15 267,606 301,591 245,648 208,669,16 277,673 153,693,18 156,757 211,764 267,778,17 352,776,16 405,785,15 455,774 491,773 549,756 582,757 474,739 591,714 533,676 575,676,16 516,640 588,626 628,641 480,604 515,589 553,555 526,782 580,792 583,827 542,812 482,804 449,812 509,825 543,854 504,861 474,843 440,848 361,825 397,866 450,888 385,917 176,808,15 222,808 245,856,19 297,870 392,658,59"],
["p",900,270,"479,58 523,71 565,58 651,57 411,73 330,90 290,127 366,112 333,152 414,114 458,94 495,98 530,105 573,108 613,86 634,118 679,96 458,141,16 502,138 545,150,15 600,147 664,143 702,142 746,153 785,169 811,205 761,208 712,184 670,179 635,167 610,190 575,176 532,186 498,178 384,178,22 450,205,20 568,227,20 248,202,23 330,196 366,222 406,234 299,234 337,251 377,261 258,261 220,270 297,273 332,291 373,285 408,284 443,255 479,254 507,226 530,261 503,289 458,301 251,302 207,306 158,315 296,320,15 350,334,16 405,337 452,357 226,349,18 287,367,18 336,354 413,372 372,378 186,383 203,418 239,404 296,416 325,400 447,405 486,391 458,430 435,443 397,457,15 342,450 256,450 363,486 464,475 503,464 501,493 480,515,15 424,515,22 439,543 396,551 364,532 252,526 289,638 311,730 536,525,16 580,532 616,530 663,536,16 708,520 732,490 768,510 816,534 779,552 740,552 698,562 717,596 685,626 659,584 628,561 587,569,17 618,600 570,607 506,555 484,578 553,641 506,703 547,715 513,743 628,745 617,227 644,202 684,210 656,240 691,251 724,223 749,252 788,238 817,260 853,269 892,283 928,310 944,367 915,404 906,443 872,483 826,493 795,479 824,458 867,445 830,424 796,440 767,421 766,460 765,384 799,403 825,379 868,397,17 797,361 765,346 825,337 861,352 904,363 891,328 850,312 821,296 792,323 758,304 788,285 713,285 621,379,87"],
["g",730,570,"308,31 329,67 379,71,16 432,50 478,78 526,99,18 340,104 441,106 330,144 387,134,20 465,144 312,182 358,184,16 414,191 551,199 232,114,48 123,45 90,58 57,71 118,82 87,95 53,105 116,118 81,129 48,138 106,153 142,150 75,162 40,174 133,186 98,188 67,200 171,210 96,235 144,250,20 243,204 282,215,16 209,230 248,242 186,264 229,269 278,272,17 323,246 365,268 395,228 462,226 516,247 96,278 60,297 119,316 157,299 201,298 246,300 288,318 336,306,17 380,314 434,285,27 466,349,24 527,311,20 181,328 222,336 145,349 183,370 222,380 270,361,17 317,357 360,349 402,349 278,412,16 323,398,15 369,407,15 412,397 412,440 457,423 236,432 310,442 205,459 262,473 299,498 362,472,23 306,622,16"],
["t",730,570,"630,308,16 360,707,15 420,863,24 365,880 480,877 341,906 387,910 423,919 458,910 493,912 362,935 397,942 432,956 469,950 362,976 401,981 454,992 382,1016 423,1018"]];
const fill={o:"#ff7045",g:"#8cb900",b:"#00c4ff",p:"#d97bd8",t:"#209270"};
const rim={o:"#7f3822",g:"#465c00",b:"#006280",p:"#6c3d6c",t:"#10493a"};
const nodes=[];
for(const [k,ox,oy,s] of sets)for(const w of s.split(" ")){const [x,y,r=14]=w.split(",").map(Number);nodes.push({k,x:ox+x/3,y:oy+y/3,r:r/3})}
let seed=7;const rnd=()=>(seed=(seed*16807)%2147483647)/2147483647;
const by=k=>nodes.filter(n=>n.k===k);
const hubs={};for(const k in fill)hubs[k]=by(k).sort((a,b)=>b.r-a.r);
let d="",spokes="";
const seg=(a,b)=>`M${a.x.toFixed(1)} ${a.y.toFixed(1)}L${b.x.toFixed(1)} ${b.y.toFixed(1)}`;
const link=(a,b)=>{d+=seg(a,b)},spoke=(a,b)=>{spokes+=seg(a,b)};
for(const n of nodes){
  const h=hubs[n.k];
  if(n.k==="t"){if(n.y>800)spoke(n,h[0]);continue}
  if(n.y>760)continue;
  if(n.k==="o"){spoke(n,n.y<440&&n.x<880?h[1]:h[0])}else spoke(n,h[0]);
  const near=nodes.filter(m=>m!==n&&m.k!=="t"&&m.y<760&&Math.hypot(m.x-n.x,m.y-n.y)<110);
  const rimNode=(n.k==="p"&&n.x>1140)||(n.k==="g"&&n.x<780)||(n.k==="o"&&n.x<815&&n.y<440);
  for(let i=rimNode?0:4;i>0;i--)if(near.length)link(n,near[Math.floor(rnd()*near.length)]);
}
const pick=a=>a[Math.floor(rnd()*a.length)];
const core=by("p").filter(n=>n.x<1100),bl=by("b"),gr=by("g").filter(n=>n.x>790&&n.y<760),og=by("o").filter(n=>n.x>800);
for(let i=0;i<130;i++)link(pick(core),pick(hubs.p.slice(0,7)));
for(const n of core)if(rnd()<.4)spoke(n,hubs.b[0]);
for(let i=0;i<110;i++)link(pick(bl),pick(core));
for(let i=0;i<120;i++)link(pick(bl),pick(gr));
for(let i=0;i<90;i++)link(pick(gr),pick(hubs.g.slice(0,9).concat(hubs.b[0])));
for(let i=0;i<70;i++)link(pick(og),pick(bl));
for(let i=0;i<30;i++)link(pick(og),pick(gr));
const at=(x,y)=>({x,y});
[[870,858,940,673],[940,673,1090,530],[940,673,902,652],[870,858,876,700],[870,858,850,806],[850,806,832,736],[832,777,815,728],[832,777,870,858],[832,777,860,700],[832,777,820,735],[859,344,982,337],[790,690,820,610],[998,591,930,680],[998,591,1029,575],[998,591,1000,520],[1109,518,1080,455],[914,636,998,595],[880,680,998,592],[778,464,790,690],[788,543,800,700]].forEach(([a,b,c,e])=>link(at(a,b),at(c,e)));
let out=`<path d="${d}" fill="none" stroke="#777" stroke-opacity=".28" stroke-width=".7" stroke-dasharray="3 1"/><path d="${spokes}" fill="none" stroke="#777" stroke-opacity=".4" stroke-width=".8" stroke-dasharray="5 1"/>`;
let tags="";
for(const n of nodes){const s=n.r>7?n.r*.14:.9;out+=`<circle cx="${n.x.toFixed(1)}" cy="${n.y.toFixed(1)}" r="${(n.r-s/2).toFixed(1)}" fill="${fill[n.k]}" stroke="${rim[n.k]}" stroke-width="${s.toFixed(1)}"/>`;
 const w=n.r>10?n.r*.45:4+Math.pow(rnd(),3)*11;tags+=`M${(n.x-w).toFixed(1)} ${n.y.toFixed(1)}h${(2*w).toFixed(1)}`}
out+=`<path d="${tags}" stroke="#111" stroke-opacity=".55" stroke-width="1" stroke-dasharray="2 .5 1 .4"/>`;
document.getElementById("net").innerHTML=out;
</script>
</body>
</html>
